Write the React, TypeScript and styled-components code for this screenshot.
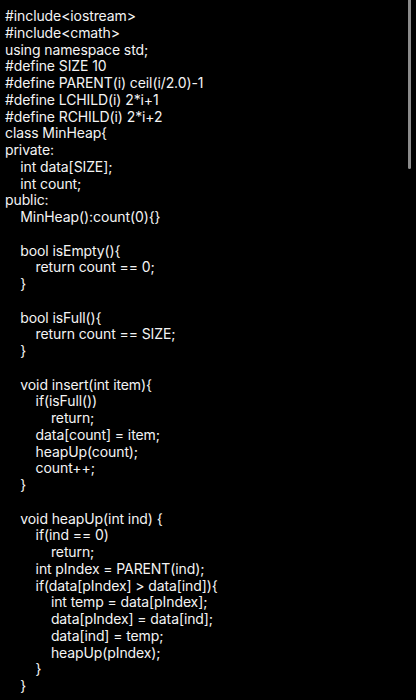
import React from "react";
import styled, { createGlobalStyle } from "styled-components";

const Global = createGlobalStyle`
  html, body { margin: 0; padding: 0; background: #000; }
  #root { width: 416px; height: 700px; }
`;

const Screen = styled.div`
  position: relative;
  width: 416px;
  height: 700px;
  overflow: hidden;
  background: #000;
`;

const Code = styled.div`
  display: flex;
  flex-direction: column;
  padding: 8px 0 0 5px;
  font-family: Inter, "Noto Sans", sans-serif;
  font-size: 14px;
  color: #f4f4f4;
  letter-spacing: -0.1px;
`;

const Line = styled.div<{ $indent: number }>`
  height: 16.75px;
  line-height: 16.75px;
  white-space: pre;
  padding-left: ${(p) => p.$indent * 15.3}px;
`;

const ScrollThumb = styled.div`
  position: absolute;
  top: 0;
  right: 5px;
  width: 3px;
  height: 169px;
  border-radius: 0 0 2px 2px;
  background: #8b8b8b;
`;

const lines: [number, string][] = [
  [0, "#include<iostream>"],
  [0, "#include<cmath>"],
  [0, "using namespace std;"],
  [0, "#define SIZE 10"],
  [0, "#define PARENT(i) ceil(i/2.0)-1"],
  [0, "#define LCHILD(i) 2*i+1"],
  [0, "#define RCHILD(i) 2*i+2"],
  [0, "class MinHeap{"],
  [0, "private:"],
  [1, "int data[SIZE];"],
  [1, "int count;"],
  [0, "public:"],
  [1, "MinHeap():count(0){}"],
  [0, ""],
  [1, "bool isEmpty(){"],
  [2, "return count == 0;"],
  [1, "}"],
  [0, ""],
  [1, "bool isFull(){"],
  [2, "return count == SIZE;"],
  [1, "}"],
  [0, ""],
  [1, "void insert(int item){"],
  [2, "if(isFull())"],
  [3, "return;"],
  [2, "data[count] = item;"],
  [2, "heapUp(count);"],
  [2, "count++;"],
  [1, "}"],
  [0, ""],
  [1, "void heapUp(int ind) {"],
  [2, "if(ind == 0)"],
  [3, "return;"],
  [2, "int pIndex = PARENT(ind);"],
  [2, "if(data[pIndex] > data[ind]){"],
  [3, "int temp = data[pIndex];"],
  [3, "data[pIndex] = data[ind];"],
  [3, "data[ind] = temp;"],
  [3, "heapUp(pIndex);"],
  [2, "}"],
  [1, "}"],
];

export default function App() {
  return (
    <Screen>
      <Global />
      <Code>
        {lines.map(([indent, text], i) => (
          <Line key={i} $indent={indent}>
            {text}
          </Line>
        ))}
      </Code>
      <ScrollThumb />
    </Screen>
  );
}
